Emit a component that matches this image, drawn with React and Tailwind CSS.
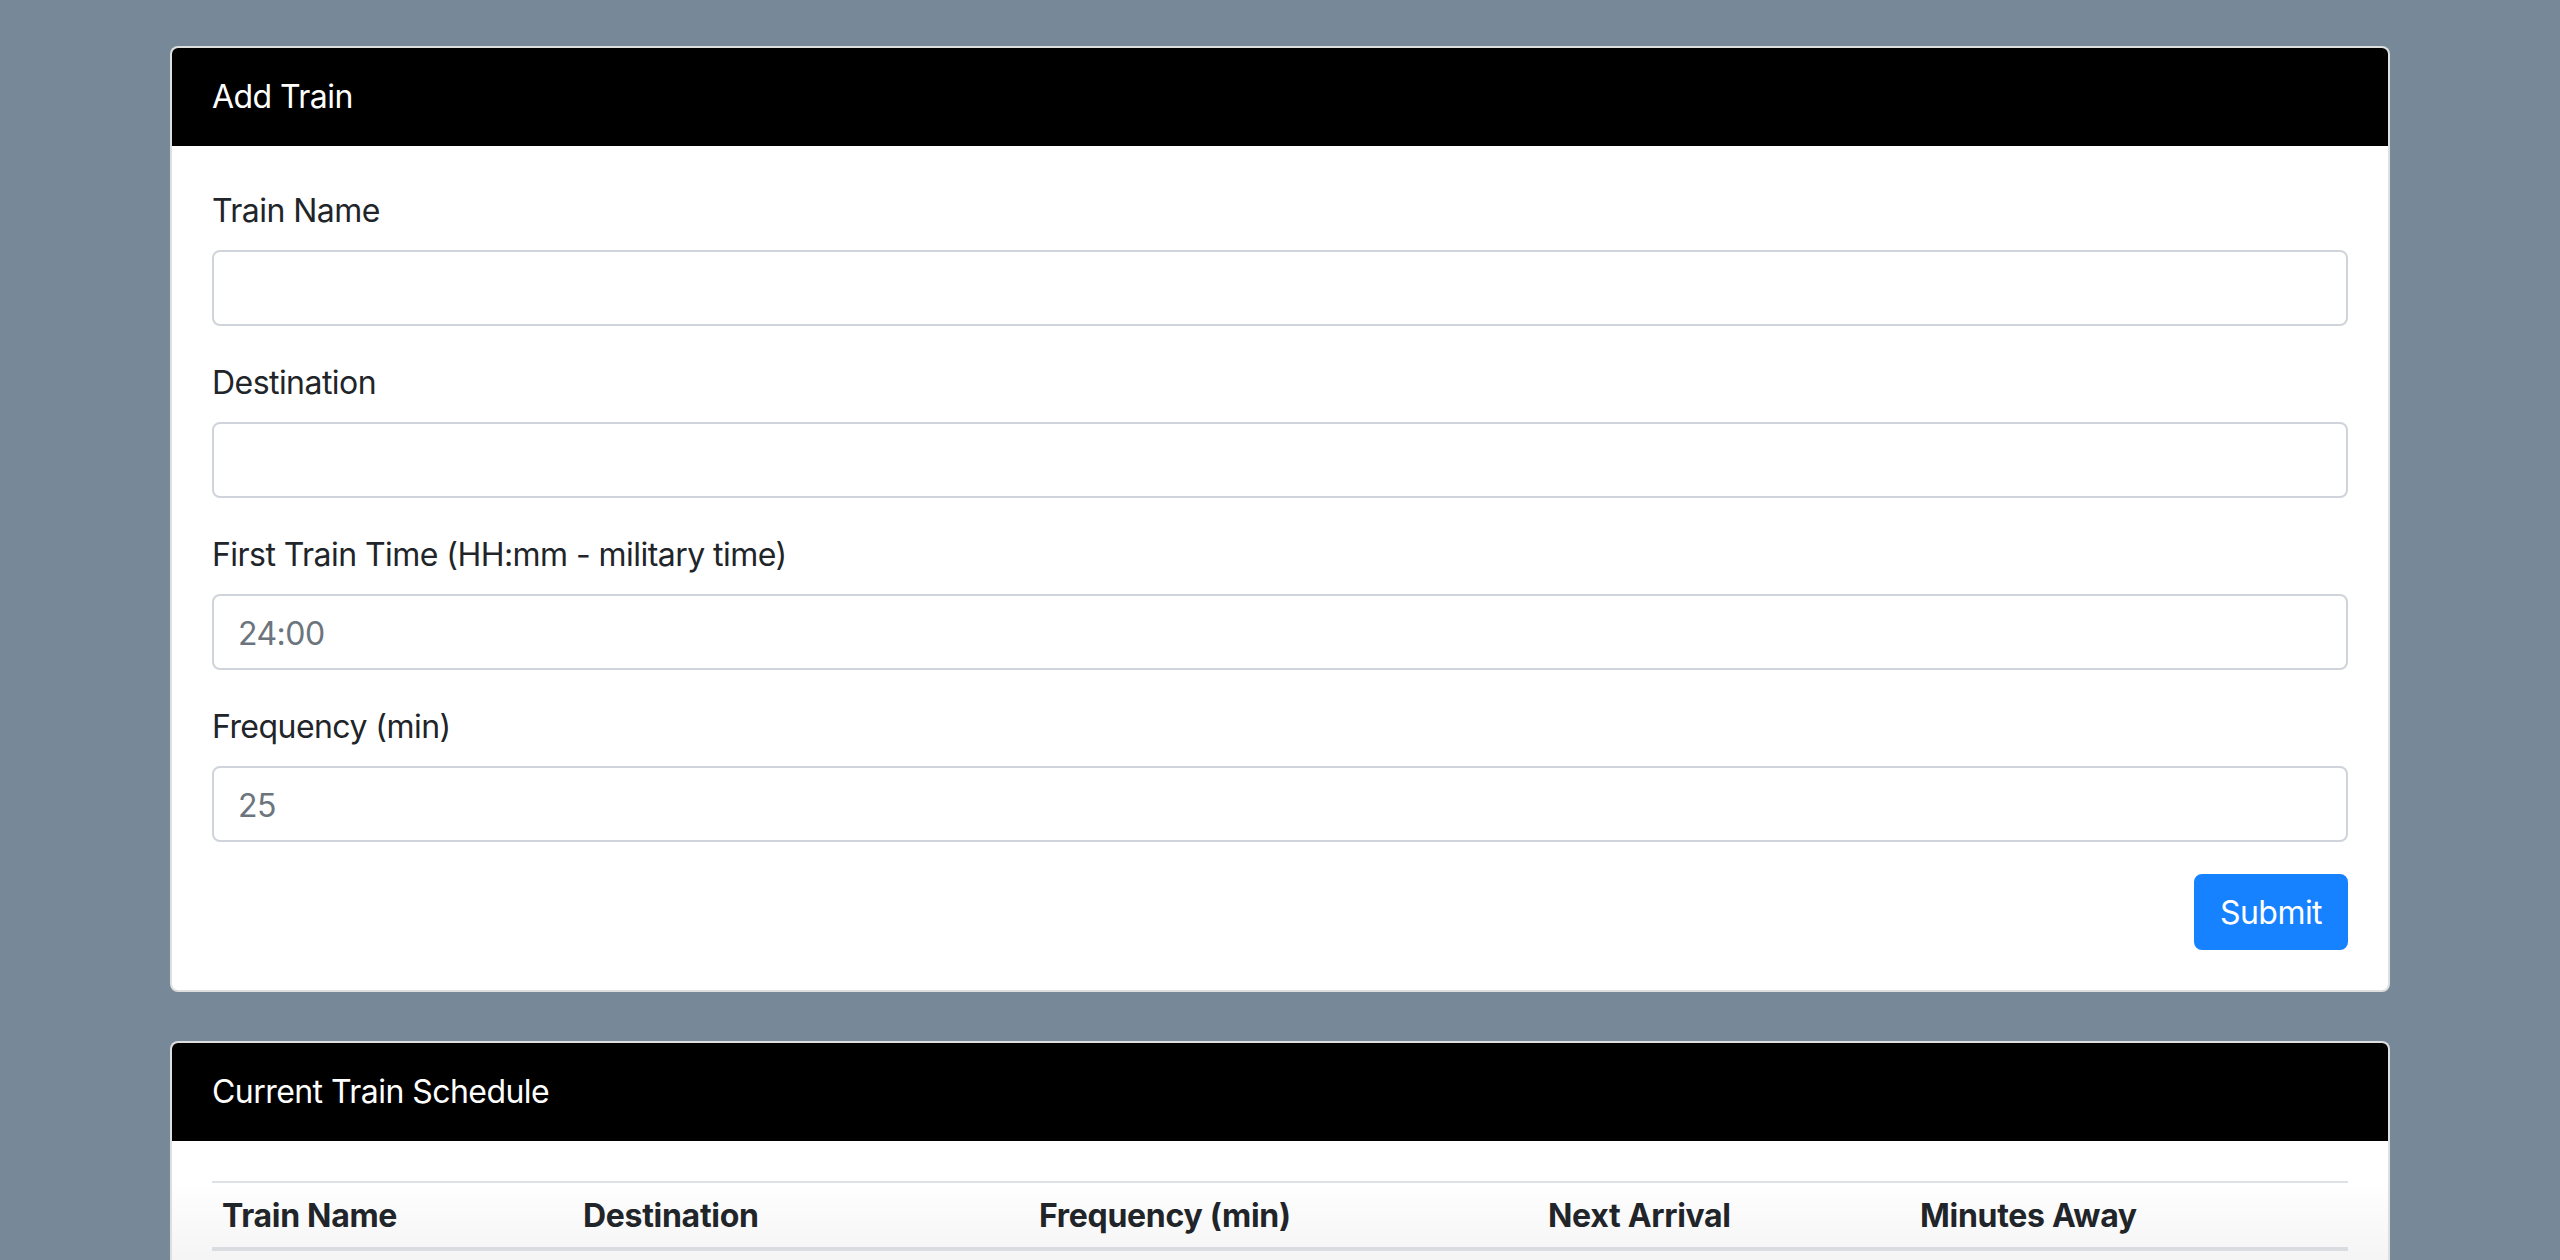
import React from "react";

function Field({ label, placeholder }) {
  return (
    <div className="mb-[32px]">
      <label className="block mb-[16px] pt-[2px] text-[32px] leading-[46px] tracking-[-0.55px] text-[#212529]">{label}</label>
      <input
        type="text"
        placeholder={placeholder}
        className="block w-full h-[76px] px-[24px] pt-[13px] pb-[11px] text-[32px] leading-[48px] tracking-[-0.55px] text-[#495057] bg-white border-2 border-[#ced4da] rounded-[8px] placeholder:text-[#6c757d] outline-none"
      />
    </div>
  );
}

export default function App() {
  return (
    <div className="min-h-screen bg-[#778899] pt-[46px] pb-[40px] font-['Inter','Helvetica_Neue',Arial,sans-serif]">
      <div className="w-[2220px] mx-auto">
        <div className="bg-white border-2 border-black/[0.125] rounded-[8px] overflow-hidden">
          <div className="bg-black text-white text-[32px] leading-[48px] tracking-[-0.55px] px-[40px] pt-[25px] pb-[23px] border-b-2 border-black">
            Add Train
          </div>
          <div className="px-[40px] pt-[40px] pb-[40px]">
            <Field label="Train Name" placeholder="" />
            <Field label="Destination" placeholder="" />
            <Field label="First Train Time (HH:mm - military time)" placeholder="24:00" />
            <Field label="Frequency (min)" placeholder="25" />
            <div className="flex justify-end">
              <button className="h-[76px] px-[24px] pt-[1px] text-[32px] leading-[48px] tracking-[-0.55px] text-white bg-[#1782ff] border-2 border-[#1782ff] rounded-[8px]">
                Submit
              </button>
            </div>
          </div>
        </div>

        <div className="mt-[49px] bg-white border-2 border-black/[0.125] rounded-[8px] overflow-hidden">
          <div className="bg-black text-white text-[32px] leading-[48px] tracking-[-0.55px] px-[40px] pt-[25px] pb-[23px] border-b-2 border-black">
            Current Train Schedule
          </div>
          <div className="px-[40px] pt-[40px] pb-[200px] bg-[linear-gradient(to_bottom,#ffffff_40px,#f3f3f3_130px,#f3f3f3)]">
            <div className="grid grid-cols-[361px_456px_509px_372px_1fr] border-t-2 border-[#dee2e6] border-b-4 border-b-[#d9dde1]">
              {["Train Name", "Destination", "Frequency (min)", "Next Arrival", "Minutes Away"].map((h) => (
                <div key={h} className="px-[10px] pt-[9px] pb-[7px] text-[32px] leading-[48px] font-bold tracking-[-0.3px] text-[#212529]">
                  {h}
                </div>
              ))}
            </div>
          </div>
        </div>
      </div>
    </div>
  );
}
